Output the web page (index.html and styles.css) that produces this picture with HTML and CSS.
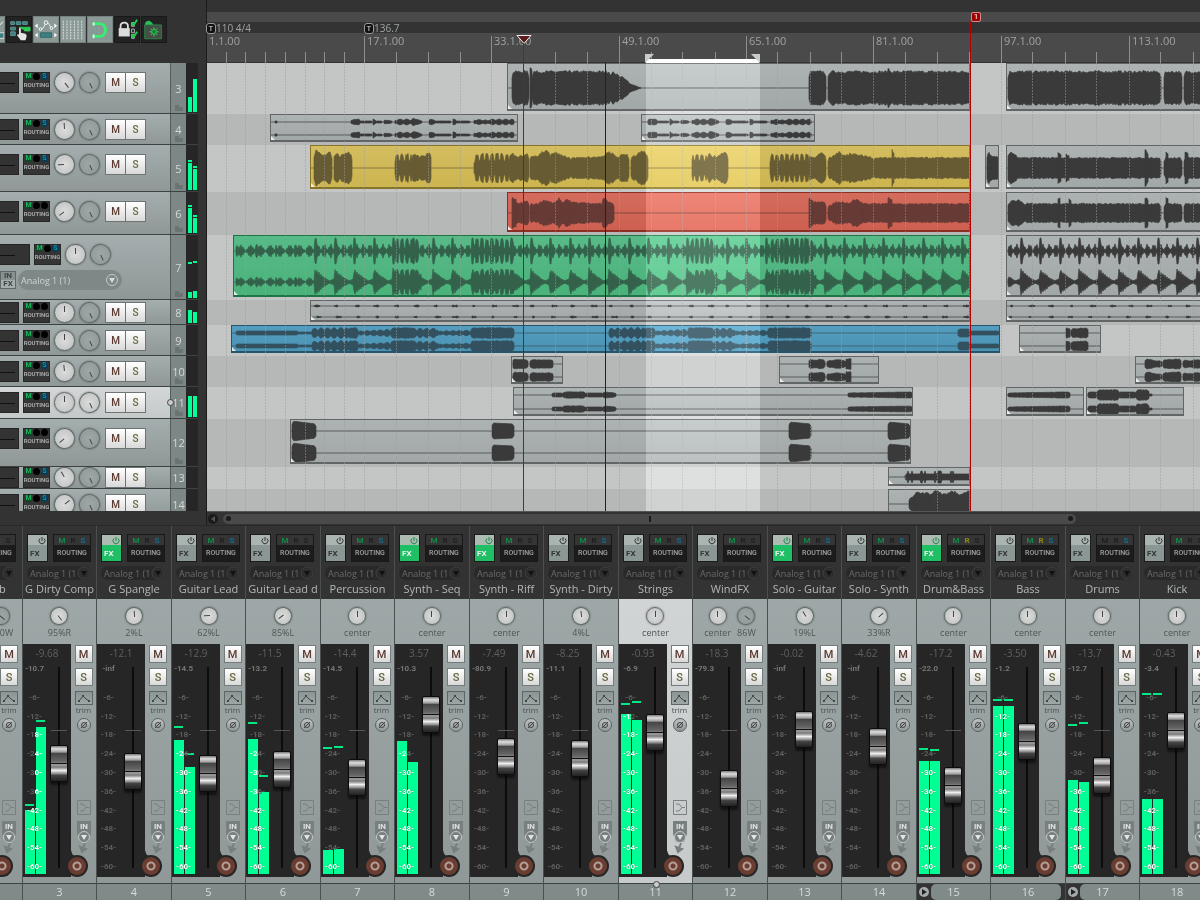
FILE: index.html
```html
<!DOCTYPE html>
<html lang="en">
	<head>
		<meta charset="UTF-8" />
		<meta name="viewport" content="width=device-width, initial-scale=1.0" />
		<title>Arrange and Mixer</title>
		<link rel="stylesheet" href="styles.css">
	</head>
	<body>
		<main class="arrange">
			<section class="side">
				<div class="toolbar">
					<button class="tool on" aria-label="Item edit"><svg viewBox="0 0 26 26"><path d="M18 5l3 3 4-4" stroke="#fff" fill="none" /><path d="M16 16h10v6H16z" fill="#3d7f80" stroke="#dfe8e6" /></svg></button>
					<button class="tool" aria-label="Grouping"><svg viewBox="0 0 26 26"><path d="M4 4h4v3H4zM10 4h5v3h-5zM17 4h5v3h-5zM4 10h5v3H4zM4 15h5v4H4z" fill="#3d7f80" stroke="#5f9997" /><path d="M13 10h5v3M19 10h6v4h-6z" fill="#2ecc55" stroke="#2ecc55" /><path d="M13 11q2-1 2 1v4l5 1q2 1 1 4l-1 3h-5l-4-5q0-2 2-1z" fill="#e4e4e4" /></svg></button>
					<button class="tool on" aria-label="Envelopes move with items"><svg viewBox="0 0 26 26"><path d="M7 12l3-1 3-6 3 1 2 4h2" stroke="#e8eeee" fill="none" /><circle cx="7" cy="12" r="1.500" fill="#8b9997" stroke="#fff" /><circle cx="13" cy="5" r="2" fill="#8b9997" stroke="#fff" /><circle cx="19" cy="11" r="1.500" fill="#8b9997" stroke="#fff" /><path d="M4 6v5L1 8.500zM22 6v5l3-2.500zM4 16v5l-3-2.500zM22 16v5l3-2.500z" fill="#fff" /><path d="M7 16h12v5H7z" fill="#3d7f80" stroke="#2f6a6b" /></svg></button>
					<button class="tool on" aria-label="Grid lines"><svg viewBox="0 0 26 26"><path d="M2.500 3v20M6.500 3v20M10.500 3v20M14.500 3v20M18.500 3v20M22.500 3v20" stroke="#e4eae8" stroke-dasharray="2 1" /></svg></button>
					<button class="tool on" aria-label="Snapping"><svg viewBox="0 0 26 26"><path d="M4.500 3v20M9.500 3v20M14.500 3v20M19.500 3v20M23.500 3v20" stroke="#6ea091" stroke-dasharray="2 1" /><path d="M6 6h7q6 1 6 7t-6 7H6" stroke="#38f070" stroke-width="3" fill="none" /><path d="M6 5v3M6 18v4" stroke="#d6ffe0" stroke-width="2" /></svg></button>
					<button class="tool" aria-label="Locking"><svg viewBox="0 0 26 26"><path d="M6 12V9q0-4 4-4t4 4v3" stroke="#dcdcdc" stroke-width="2" fill="none" /><path d="M4 11h12v9H4z" fill="#dcdcdc" /><path d="M18 5h3v4h-3zM18 12h3v4h-3zM18 18h3v4h-3z" stroke="#bbb" fill="none" /><path d="M18 5l2 3 4-6M18 18l2 3 4-6" stroke="#22d055" stroke-width="2" fill="none" /></svg></button>
					<button class="tool" aria-label="Project settings"><svg viewBox="0 0 26 26"><path d="M3 7q1-4 4-4t5 4v2H3z" fill="#22c055" /><path d="M3 7.500h18v15H3z" fill="#454d47" stroke="#2c8a48" /><path d="M13 10v10M8 15h10M9.500 11.500l7 7M16.500 11.500l-7 7" stroke="#2fe565" /><circle cx="13" cy="15" r="2.500" fill="#177a35" stroke="#2fc55a" /></svg></button>
				</div>
				<div class="tracks" id="tracks"></div>
			</section>

			<section class="timeline">
				<header class="ruler" id="ruler">
					<div class="regions"></div>
					<div class="tempo"></div>
					<div class="bars"></div>
				</header>
				<div class="lanes" id="lanes"></div>
				<div class="scroll">
					<button class="scroll-left" aria-label="Scroll left"><svg viewBox="0 0 10 10"><path d="M7 2v6L3 5z" fill="#555" /></svg></button>
					<div class="scroll-bar"><i></i><b></b><i></i></div>
				</div>
			</section>
		</main>

		<section class="mixer" id="mixer"></section>

		<script src="script.js"></script>
	</body>
</html>
```
FILE: styles.css
```css
* {
	box-sizing: border-box;
}

body {
	margin: 0;
	height: 100vh;
	display: flex;
	flex-direction: column;
	overflow: hidden;
	background-color: #333;
	color: #b4b7b7;
	font-family: "Open Sans", "Noto Sans", sans-serif;
	font-size: 11px;
}

button,
select,
input {
	margin: 0;
	padding: 0;
	border: 0;
	font-family: inherit;
	color: inherit;
}

svg {
	display: block;
}

.arrange {
	flex: 1;
	min-height: 0;
	display: grid;
	grid-template-columns: 206px 1fr;
}

/* ---- track panel ---- */

.side {
	display: flex;
	flex-direction: column;
	min-height: 0;
	overflow: hidden;
	padding: 16px 8px 14px 0;
}

.toolbar {
	display: flex;
	gap: 1px;
	width: 190px;
	height: 47px;
	margin-left: -21px;
}

.tool {
	flex: none;
	width: 26px;
	height: 27px;
	background-color: #222;
	border: 1px solid #191919;
}

.tool svg {
	width: 24px;
	height: 24px;
}

.tool.on {
	background-color: #8b9997;
	border-color: #77827f;
}

.tracks {
	flex: 1;
	min-height: 0;
	overflow: hidden;
}

.track {
	display: grid;
	grid-template-columns: 170px 16px 12px;
	border-bottom: 1px solid #3c4141;
	overflow: hidden;
}

.track-main {
	background-image: linear-gradient(#a5aeae, #8f9897);
	overflow: hidden;
}

.track.selected .track-main {
	background-image: linear-gradient(#d3d7d7, #c5c9c9);
}

.track-controls {
	display: flex;
	align-items: center;
	height: 100%;
	max-height: 39px;
	gap: 4px;
}

.track-vol {
	width: 19px;
	height: 21px;
	background-image: linear-gradient(#111, #111);
	background-repeat: no-repeat;
	background-size: 15px 1px;
	background-position: 0 10px;
	background-color: #333;
	border: 1px solid #252525;
	border-left: 0;
}

.tall .track-vol {
	width: 30px;
}

.routing-mini {
	width: 27px;
	height: 21px;
	background-color: #353535;
	border: 1px solid #272727;
	display: flex;
	flex-direction: column;
	align-items: center;
	gap: 1px;
}

.dots {
	display: flex;
	gap: 1px;
}

.dots i {
	width: 7px;
	height: 7px;
	border-radius: 50%;
	background-color: #000;
	color: #000;
	font: bold 7px/7px Roboto, sans-serif;
	text-align: center;
}

.dots .m {
	background-color: #0a4a26;
	color: #1fb560;
}

.dots .s {
	background-color: #083c50;
	color: #1b8cb4;
}

.routing-mini span {
	font: bold 6px/8px Roboto, sans-serif;
	color: #aaa;
}

.knob {
	appearance: none;
	flex: none;
	width: 21px;
	height: 21px;
	border-radius: 50%;
	border: 1px solid #626969;
	background: linear-gradient(#444, #444) 50% 3px / 1px 6px no-repeat, radial-gradient(#dcdcdc, #bdbfbf);
	box-shadow: 0 0 2px rgba(0, 0, 0, 0.5);
	transform: rotate(var(--turn));
}

.knob.width {
	background: linear-gradient(#444, #444) 50% 3px / 1px 6px no-repeat, radial-gradient(#9fa8a7, #8d9796);
}

.selected .knob.width {
	background-image: linear-gradient(#444, #444), radial-gradient(#dcdcdc, #bdbfbf);
}

.knob::-webkit-slider-thumb {
	appearance: none;
	width: 1px;
	height: 1px;
}

.mute-solo {
	display: flex;
	margin-left: 1px;
	border: 1px solid #6d7474;
}

.ms {
	background-image: linear-gradient(#fff, #d9d9d9);
	font: 500 10px/17px Roboto, sans-serif;
	color: #5c3a30;
}

.ms.solo {
	color: #65693f;
}

.mute-solo .ms {
	width: 19px;
	height: 19px;
}

.mute-solo .solo {
	border-left: 1px solid #6d7474;
	width: 20px;
}

.track-input {
	display: flex;
	align-items: center;
	gap: 2px;
	height: 20px;
	margin-top: -4px;
}

.in-fx {
	width: 16px;
	height: 18px;
	background-image: linear-gradient(#87918f 50%, #a4afad 50%);
	border: 1px solid #5f6868;
	font: bold 8px/8px Roboto, sans-serif;
	color: #3c4343;
}

.pill {
	appearance: none;
	border-radius: 10px;
	background-repeat: no-repeat;
	text-overflow: clip;
	overflow: hidden;
	white-space: nowrap;
}

.track-input .pill {
	width: 104px;
	height: 20px;
	padding: 0 22px 0 3px;
	font-size: 9px;
	color: #d0d4d4;
	background-color: #7d8887;
	background-image: url("data:image/svg+xml,%3Csvg xmlns='http://www.w3.org/2000/svg' width='14' height='14'%3E%3Ccircle cx='7' cy='7' r='5.500' fill='none' stroke='%23c4caca'/%3E%3Cpath d='M4 5h6l-3 5z' fill='%23d6dada'/%3E%3C/svg%3E");
	background-position: right 3px center;
}

.track-number {
	position: relative;
	display: grid;
	place-items: center;
	background-color: #7c8786;
	border-left: 1px solid #555c5c;
	color: #d5d8d8;
}

.track-number svg {
	position: absolute;
	left: 4px;
	bottom: 2px;
	width: 8px;
	height: 6px;
}

.selected .track-number::before {
	content: "";
	position: absolute;
	left: -4px;
	width: 5px;
	height: 5px;
	border: 1px solid #444;
	border-radius: 50%;
	background-color: #ccc;
}

.track-meter {
	position: relative;
	display: flex;
	align-items: flex-end;
	gap: 1px;
	padding: 0 1px 1px 2px;
	background-color: #262626;
}

.track-meter i {
	width: 4px;
	background-color: #00ff94;
}

.track-meter .peak {
	position: absolute;
	left: 2px;
	height: 2px;
}

.track-meter .peak.right {
	left: 7px;
}

/* ---- timeline ---- */

.timeline {
	display: flex;
	flex-direction: column;
	min-width: 0;
	min-height: 0;
	padding-top: 12px;
	border-left: 1px solid #1c1c1c;
}

.ruler {
	position: relative;
	color: #a0a3a3;
}

.regions {
	height: 10px;
	background-color: #4a4a4a;
}

.tempo {
	height: 11px;
	background-color: #333;
}

.bars {
	height: 30px;
	background-color: #4a4a4a;
	border-bottom: 1px solid #333;
}

.ruler svg {
	position: absolute;
	left: 0;
	bottom: 0;
}

.ruler span {
	position: absolute;
	line-height: 12px;
}

.bar-label {
	top: 23px;
}

.ruler .tempo-label {
	top: 11px;
	font-size: 10px;
	line-height: 11px;
	display: flex;
}

.tempo-label i {
	width: 10px;
	height: 11px;
	border: 1px solid #999;
	border-radius: 3px;
	background-color: #111;
	color: #ddd;
	font: 8px/9px Roboto, sans-serif;
	text-align: center;
}

.ruler .marker {
	top: 0;
	width: 10px;
	height: 10px;
	border: 1px solid #d88;
	border-radius: 2px;
	background-color: #a00000;
	color: #fff;
	font: 8px/8px Roboto, sans-serif;
	text-align: center;
}

.ruler .loop {
	bottom: 0;
	height: 4px;
	background-color: #fff;
}

.lanes {
	flex: 1;
	min-height: 0;
	position: relative;
	overflow: hidden;
	background-color: #c4c6c5;
}

.lane {
	position: relative;
}

.lane:nth-child(even) {
	background-color: #b6b8b7;
}

.clip {
	position: absolute;
	top: 0;
	bottom: 3px;
	border: 1px solid #626565;
	border-bottom-width: 2px;
	background-image: linear-gradient(#adb3b3, #a2a8a8);
	fill: #3a3a3a;
	stroke: #3a3a3a;
	overflow: hidden;
}

.clip::after {
	content: "";
	position: absolute;
	left: 0;
	bottom: 0;
	border: 2px solid transparent;
	border-left-color: #fff;
	border-bottom-color: #fff;
	opacity: 0.8;
}

.clip.yellow {
	background-image: linear-gradient(#d3bd5f, #cdb550);
	border-color: #86742b;
	fill: #675b33;
	stroke: #675b33;
}

.clip.red {
	background-image: linear-gradient(#d46c5e, #cd5f4f);
	border-color: #8b2f25;
	fill: #663a35;
	stroke: #663a35;
}

.clip.green {
	background-image: linear-gradient(#57ba87, #4bb27b);
	border-color: #1f7347;
	fill: #33614a;
	stroke: #33614a;
}

.clip.blue {
	background-image: linear-gradient(#559dbe, #4a93b5);
	border-color: #26556b;
	fill: #33505e;
	stroke: #33505e;
}

.clip svg {
	position: absolute;
	left: 0;
	top: 0;
}

.overlay {
	position: absolute;
	top: 0;
	bottom: 0;
}

.overlay.selection {
	background-color: #1a1a1a;
	mix-blend-mode: plus-lighter;
}

.overlay.edit {
	width: 1px;
	background-color: #8a1c1c;
}

.overlay.play {
	width: 1px;
	background-color: #222;
}

.overlay.mark {
	width: 1px;
	background-color: #b80000;
}

.scroll {
	display: flex;
	align-items: center;
	gap: 5px;
	height: 14px;
	padding-left: 1px;
	border-top: 1px solid #555;
}

.scroll-left {
	width: 10px;
	height: 10px;
	border-radius: 50%;
	background-color: #1a1a1a;
}

.scroll-bar {
	width: 86%;
	height: 10px;
	padding: 0 3px;
	border-radius: 5px;
	background-color: #4a4a4a;
	display: flex;
	align-items: center;
	justify-content: space-between;
}

.scroll-bar i {
	width: 5px;
	height: 5px;
	border-radius: 50%;
	background-color: #1a1a1a;
}

.scroll-bar b {
	width: 2px;
	height: 6px;
	background-color: #1a1a1a;
}

/* ---- mixer ---- */

.mixer {
	display: flex;
	flex: none;
	margin-left: -53px;
	border-top: 1px solid #292929;
}

.strip {
	flex: none;
	width: 75px;
	border-left: 1px solid #4a4f4f;
	background-image: linear-gradient(#a2abab, #8f9897);
}

.strip:nth-child(even) {
	width: 74px;
}

.strip.selected {
	background-image: linear-gradient(#d3d7d7, #c5c9c9);
}

.strip-head {
	height: 73px;
	padding-top: 8px;
	background-color: #333;
}

.strip-io {
	display: grid;
	grid-template-columns: 21px 38px;
	grid-template-rows: 28px 14px;
	gap: 4px 5px;
	padding-left: 4px;
}

.fx {
	border: 1px solid #1b1b1b;
	background-image: linear-gradient(#aab5b2 40%, #8b9795 40%);
	display: grid;
	grid-template-rows: 11px 15px;
	color: #333;
	font: bold 8px/15px Roboto, sans-serif;
	text-align: left;
	padding-left: 2px;
}

.fx svg {
	width: 8px;
	height: 8px;
	margin: 2px 0 0 8px;
	stroke: #333;
	fill: none;
}

.fx.on {
	background-image: linear-gradient(#aebbb2 40%, #1fbf66 40%);
	color: #eee;
}

.fx.on svg {
	stroke: #138a45;
}

.routing {
	border: 1px solid #181818;
	background-image: linear-gradient(#353535 40%, #1c1c1c 40%);
	display: grid;
	grid-template-rows: 11px 15px;
	font: 500 7px/15px Roboto, sans-serif;
	color: #a2a2a2;
}

.mrs {
	display: flex;
	justify-content: space-around;
	padding: 0 2px;
	font: bold 8px/11px Roboto, sans-serif;
}

.mrs i {
	font-style: normal;
	color: #202020;
}

.mrs .m {
	color: #12894a;
}

.mrs .r {
	color: #8b8a10;
}

.mrs .s {
	color: #116f90;
}

.strip-io .pill {
	grid-column: 1 / 3;
	height: 14px;
	padding: 0 15px 0 3px;
	font-size: 9px;
	line-height: 13px;
	color: #6a6a6a;
	background-color: #292929;
	background-image: url("data:image/svg+xml,%3Csvg xmlns='http://www.w3.org/2000/svg' width='14' height='14'%3E%3Ccircle cx='7' cy='7' r='6' fill='%232d2d2d' stroke='%23404040'/%3E%3Cpath d='M4 5h6l-3 5z' fill='%23111'/%3E%3C/svg%3E");
	background-position: right center;
}

.strip-name {
	margin-top: 2px;
	text-align: center;
	line-height: 14px;
	white-space: nowrap;
}

.pan {
	display: flex;
	justify-content: center;
	gap: 6px;
	height: 45px;
	padding-top: 8px;
}

.pan label {
	display: flex;
	flex-direction: column;
	align-items: center;
	gap: 1px;
	font-size: 9px;
	line-height: 13px;
	color: #4f5555;
}

.pan .knob {
	width: 18px;
	height: 18px;
}

.strip-body {
	position: relative;
	display: grid;
	grid-template-columns: 48px 1fr;
	height: 233px;
}

.fader-panel {
	display: grid;
	grid-template-columns: 23px 25px;
	grid-template-rows: 18px 212px;
	padding-bottom: 3px;
	background-color: #262626;
}

.db {
	grid-column: 1 / 3;
	text-align: center;
	line-height: 18px;
	font-size: 10px;
	color: #606060;
}

.meter {
	position: relative;
	display: flex;
	align-items: flex-end;
	gap: 1px;
	padding-left: 2px;
}

.meter-bar {
	flex: none;
	width: 10px;
	background-color: #00ff94;
}

.meter-peak {
	position: absolute;
	left: 2px;
	width: 9px;
	height: 2px;
	background-color: #00e884;
}

.meter-peak.right {
	left: 13px;
}

.scale {
	position: absolute;
	inset: 0;
	display: flex;
	flex-direction: column;
	justify-content: space-between;
	padding-bottom: 1px;
	font: bold 8px/12px Roboto, sans-serif;
	color: #5e5e5e;
	text-align: center;
}

.scale .top {
	height: 14px;
	margin-bottom: 9px;
	color: #757575;
	white-space: nowrap;
	line-height: 14px;
}

.scale .lit {
	color: #fff;
	text-shadow: 0 0 1px #063;
}

.scale .lit-left,
.scale .lit-right {
	color: transparent;
	background-image: linear-gradient(90deg, #fff 54%, #5e5e5e 54%);
	-webkit-background-clip: text;
	background-clip: text;
}

.scale .lit-right {
	background-image: linear-gradient(90deg, #5e5e5e 54%, #fff 54%);
}

.fader-cell {
	background-image: linear-gradient(#555, #555), linear-gradient(#0c0c0c, #0c0c0c);
	background-repeat: no-repeat;
	background-position: 50% 68px, 50% 5px;
	background-size: 16px 1px, 2px 201px;
	padding-top: 5px;
	display: flex;
	justify-content: center;
}

.fader {
	appearance: none;
	writing-mode: vertical-lr;
	direction: rtl;
	width: 18px;
	height: 201px;
	background: none;
}

.fader::-webkit-slider-thumb {
	appearance: none;
	width: 18px;
	height: 37px;
	border: 1px solid #0c0c0c;
	border-radius: 2px;
	box-shadow: 0 3px 2px rgba(0, 0, 0, 0.5);
	background-image: linear-gradient(#777 0, #ddd 8%, #999 18%, #444 20%, #666 44%, #888 47%, #111 48%, #111 52%, #aaa 53%, #777 60%, #eee 70%, #999 78%, #444 84%, #222 100%);
}

.strip-side {
	display: flex;
	flex-direction: column;
	align-items: center;
	padding-top: 1px;
}

.strip-side .ms {
	width: 18px;
	height: 18px;
	margin-bottom: 5px;
	border: 1px solid #747b7b;
	font-size: 11px;
	line-height: 15px;
}

.env {
	width: 18px;
	height: 14px;
	border: 1px solid #5d6666;
	background-image: linear-gradient(#8a9594, #9ca7a6);
}

.env svg {
	width: 16px;
	height: 12px;
	stroke: #3f4747;
	fill: #3f4747;
}

.trim {
	font-size: 8px;
	line-height: 10px;
	color: #4b5151;
	margin-bottom: 3px;
}

.phase {
	width: 14px;
	height: 14px;
	border: 1px solid #565d5d;
	border-radius: 50%;
	background-image: linear-gradient(#c0c4c4, #8f9796);
}

.phase svg {
	width: 12px;
	height: 12px;
	stroke: #444;
	fill: none;
}

.io {
	width: 16px;
	height: 54px;
	margin-top: 68px;
	fill: none;
	stroke: #77807f;
}

.io text {
	font: bold 8px Roboto, sans-serif;
	fill: #dde0e0;
	stroke: none;
}

.strip-body::after {
	content: "";
	position: absolute;
	left: 48px;
	bottom: 20px;
	width: 6px;
	height: 6px;
	background-image: radial-gradient(circle at 100% 0, transparent 5px, #262626 6px);
}

.rec {
	position: absolute;
	left: 45px;
	bottom: 2px;
	width: 18px;
	height: 18px;
	border-radius: 50%;
	background-image: radial-gradient(#6a3d30 2px, #b59d97 3px, #b59d97 4px, #6a3d30 5px);
	box-shadow: 0 0 0 2px #262626;
}

.strip-foot {
	position: relative;
	margin-top: 6px;
	height: 17px;
	border-top: 1px solid #3c4141;
	background-color: #7f8a89;
	color: #d8dbdb;
	text-align: center;
	line-height: 16px;
}

.selected .strip-foot::before {
	content: "";
	position: absolute;
	left: calc(50% - 3px);
	top: -3px;
	width: 5px;
	height: 5px;
	border: 1px solid #444;
	border-radius: 50%;
	background-color: #ccc;
}

.strip-foot.folder {
	display: grid;
	grid-template-columns: 14px 1fr 14px;
	background-color: #333;
}

.strip-foot.folder span {
	grid-column: 2 / 4;
	padding-right: 14px;
	background-color: #7f8a89;
	border-radius: 5px 0 0 5px;
}

.strip-foot.folder svg {
	width: 10px;
	height: 10px;
	margin: 3px 2px;
}

.strip-foot.last {
	background-color: #333;
	padding-right: 4px;
}

.strip-foot.last span {
	display: block;
	padding-left: 4px;
	background-color: #7f8a89;
	border-radius: 0 5px 5px 0;
}
```
FILE: script.js
```js
const PANEL = 207; // left edge of the timeline
const METER_TOP = 662;
const METER_BOTTOM = 874;

let seed = 7;
function rnd() {
	seed = (seed * 16807) % 2147483647;
	return seed / 2147483647;
}

/* number, height, pan angle, routing flags, meter heights and peaks */
const tracks = [
	{ n: 3, h: 51, pan: 142, s: true, m: [15, 33] },
	{ n: 4, h: 31, pan: -3, s: true },
	{ n: 5, h: 47, pan: -93, s: true, m: [27, 21], peaks: [29, 23] },
	{ n: 6, h: 43, pan: -127, m: [25, 15], peaks: [27, 17] },
	{ n: 7, h: 65, pan: 0, s: true, m: [6, 7], peaks: [35, 36], tall: true },
	{ n: 8, h: 25, pan: 0, m: [13, 11], small: true },
	{ n: 9, h: 31, pan: 0 },
	{ n: 10, h: 31, pan: -6, s: true },
	{ n: 11, h: 32, pan: 0, s: true, m: [21, 21], selected: true },
	{ n: 12, h: 48, pan: -130 },
	{ n: 13, h: 22, pan: -30, s: true, small: true },
	{ n: 14, h: 31, pan: 50, s: true, small: true },
];

const folder = '<svg viewBox="0 0 8 6"><path d="M0 0h4v2h4v4H0z" fill="#6a7473"/></svg>';

document.getElementById("tracks").innerHTML = tracks.map((t) => `
	<div class="track ${t.selected ? "selected" : ""} ${t.tall ? "tall" : ""}" style="height:${t.h}px">
		<div class="track-main">
			<div class="track-controls">
				<div class="track-vol"></div>
				<button class="routing-mini"><div class="dots"><i class="m">M</i><i></i><i class="${t.s ? "s" : ""}">S</i></div><span>ROUTING</span></button>
				<input class="knob" type="range" aria-label="Pan ${t.n}" style="--turn:${t.pan}deg">
				<input class="knob width" type="range" aria-label="Width ${t.n}" style="--turn:155deg">
				${t.tall ? "" : '<div class="mute-solo"><button class="ms">M</button><button class="ms solo">S</button></div>'}
			</div>
			${t.tall ? `<div class="track-input"><button class="in-fx">IN FX</button><select class="pill" aria-label="Input ${t.n}"><option>Analog 1 (1)</option></select></div>` : ""}
		</div>
		<div class="track-number">${t.n}${t.small ? "" : folder}</div>
		<div class="track-meter">${(t.m || []).map((v) => `<i style="height:${v}px"></i>`).join("")}${(t.peaks || []).map((v, i) => `<i class="peak ${i ? "right" : ""}" style="bottom:${v}px"></i>`).join("")}</div>
	</div>`).join("");

/* ---- ruler ---- */

const minor = [226, 245, 265, 285, 305, 324, 344, 396, 428, 460, 555, 587, 651, 682, 715, 777, 810, 841, 905, 937, 969, 1032, 1065, 1096, 1160, 1193];
const major = { 206: "1.1.00", 364: "17.1.00", 491: "33.1.00", 619: "49.1.00", 746: "65.1.00", 873: "81.1.00", 1001: "97.1.00", 1129: "113.1.00" };
const majorX = Object.keys(major).map(Number);
const line = (x, y, h) => `M${x - PANEL + 0.5} ${y}v${h}`;

document.getElementById("ruler").insertAdjacentHTML("beforeend", `
	<svg width="100%" height="28" stroke="#8c8f8f"><path d="${minor.map((x) => line(x, 17, 11)).join("")}${majorX.slice(1).map((x) => line(x, 1, 27)).join("")}"/></svg>
	${majorX.map((x) => `<span class="bar-label" style="left:${x - PANEL + 3}px">${major[x]}</span>`).join("")}
	<span class="tempo-label" style="left:-1px"><i>T</i>110 4/4</span>
	<span class="tempo-label" style="left:157px"><i>T</i>136.7</span>
	<span class="marker" style="left:764px">1</span>
	<span class="loop" style="left:439px;width:113px"></span>
	<svg width="100%" height="28"><path d="M438 19h9l-9 9zM553 19h-9l9 9z" fill="#c9cccc"/><path d="M310 .5h14l-7 8z" fill="#5c1c1c" stroke="#eee"/></svg>`);

/* ---- clips: a wave is a list of [from, to, start level, end level, shape] ---- */

const mono = (w) => [w];
const stereo = (w) => [w, w];
const shift = (w, d) => w.map((s) => [s[0] + d, s[1] + d, ...s.slice(2)]);

const guitar = [[350, 359, 2, 3], [359, 371, 1, 1], [372, 375, 3, 1], [375, 381, 1, 1], [383, 391, 2, 1], [394, 411, 3, 3, "blob"], [411, 421, 4, 1], [428, 434, 3, 2], [434, 450, 1, 1], [452, 455, 3, 2], [455, 469, 1, 1], [473, 487, 3, 2, "blob"], [487, 513, 3, 3, "blob"]];
const pulse = [[311, 347, 5, 6, "blob"], [347, 357, 5, 5], [357, 390, 2, 4, "blob"], [390, 415, 5, 5], [415, 437, 5, 5, "blob"], [437, 470, 2, 3, "blob"], [470, 513, 5, 5]];
const dots = (a, b) => {
	const list = [];
	for (let x = a; x < b; x += 19.6) {
		const from = x + rnd() * 3;
		list.push([from, from + 2 + rnd() * 5, 1, 1, "beat"]);
	}
	return list;
};

const clips = [
	{ t: 0, x: 507, w: 463, waves: mono([[511, 528, 16, 16], [529, 531, 21, 18], [531, 610, 16, 16], [609, 619, 16, 13], [618, 629, 13, 5], [627, 640, 5, 0], [808, 825, 16, 16], [827, 970, 16, 16], [887, 889, 21, 16]]) },
	{ t: 0, x: 1006, w: 700, waves: mono([[1007, 1160, 16, 16], [1163, 1181, 16, 16], [1183, 1700, 16, 16]]) },
	{ t: 1, x: 270, w: 248, waves: stereo([[274, 276, 1, 1], ...guitar]) },
	{ t: 1, x: 641, w: 174, waves: stereo([[647, 654, 3, 2], ...shift(guitar, 297)]) },
	{ t: 2, x: 310, w: 660, c: "yellow", waves: mono([[313, 331, 16, 15, "body"], [333, 351, 16, 14, "body"], [394, 411, 15, 15, "beat"], [411, 430, 13, 15, "body"], [473, 508, 15, 15, "beat"], [508, 528, 14, 14, "body"], [529, 550, 13, 17, "body"], [549, 570, 16, 10], [569, 604, 10, 11], [602, 628, 15, 13, "body"], [630, 647, 15, 15, "body"], [691, 706, 15, 15, "beat"], [706, 727, 13, 15, "body"], [769, 808, 15, 15, "beat"], [808, 825, 14, 14, "body"], [827, 848, 12, 17, "body"], [847, 873, 15, 10], [872, 970, 10, 10], [891, 893, 18, 15]]) },
	{ t: 2, x: 985, w: 14, waves: mono([[986, 998, 17, 11, "body"]]) },
	{ t: 2, x: 1006, w: 700, waves: mono([[1007, 1017, 17, 11], [1015, 1160, 10, 10], [1057, 1060, 16, 14], [1065, 1068, 14, 12], [1144, 1147, 18, 14], [1163, 1181, 10, 10], [1165, 1167, 17, 14], [1183, 1700, 10, 10], [1184, 1187, 17, 14]]) },
	{ t: 3, x: 507, w: 463, c: "red", waves: mono([[511, 515, 15, 13], [514, 528, 12, 11, "body"], [529, 561, 10, 14, "body"], [559, 602, 11, 9], [564, 569, 13, 12], [601, 607, 15, 14], [605, 613, 12, 9], [808, 812, 15, 13], [811, 825, 11, 11], [827, 863, 10, 13, "body"], [861, 970, 9, 9], [887, 891, 15, 13]]) },
	{ t: 3, x: 1006, w: 700, waves: mono([[1007, 1025, 14, 11, "body"], [1023, 1160, 9, 9], [1057, 1059, 15, 14], [1068, 1070, 14, 13], [1144, 1147, 15, 13], [1163, 1181, 9, 9], [1165, 1167, 15, 14], [1183, 1700, 9, 9]]) },
	{ t: 4, x: 233, w: 737, c: "green", waves: [[[235, 313, 8, 8, "bump"], [313, 970, 13, 13, "hit"], [394, 418, 13, 13, "comb"], [472, 513, 13, 13, "comb"], [690, 712, 13, 13, "comb"], [770, 812, 13, 13, "comb"]], [[235, 313, 6, 6, "bump"], [313, 970, 15, 15, "decay"], [394, 420, 13, 13, "beat"], [472, 513, 13, 13, "beat"], [692, 716, 13, 13, "beat"], [770, 815, 13, 13, "beat"]]] },
	{ t: 4, x: 1006, w: 700, waves: [[[1007, 1700, 13, 13, "hit"]], [[1007, 1700, 15, 15, "decay"]]] },
	{ t: 5, x: 310, w: 660, waves: [dots(313, 965), dots(314, 965)] },
	{ t: 5, x: 1006, w: 700, waves: [dots(1008, 1400), dots(1007, 1400)] },
	{ t: 6, x: 231, w: 769, c: "blue", waves: stereo([[235, 297, 2, 2, "even"], [297, 311, 1, 1, "even"], ...pulse, ...shift(pulse, 297), [957, 969, 4, 4, "even"], [969, 998, 2, 2, "even"]]) },
	{ t: 6, x: 1019, w: 82, waves: stereo([[1065, 1069, 5, 4], [1070, 1087, 4, 5]]) },
	{ t: 7, x: 511, w: 52, waves: stereo([[512, 527, 5, 4], [529, 552, 4, 4]]) },
	{ t: 7, x: 779, w: 100, waves: stereo([[808, 824, 5, 4, "body"], [826, 845, 4, 4, "body"], [845, 850, 5, 5]]) },
	{ t: 7, x: 1135, w: 500, waves: stereo([[1144, 1161, 5, 3, "body"], [1162, 1180, 4, 5], [1182, 1400, 4, 4, "body"]]) },
	{ t: 8, x: 513, w: 400, waves: stereo([[551, 562, 2, 2, "even"], [562, 584, 3, 3], [584, 602, 2, 2, "even"], [602, 615, 3, 2], [847, 911, 2, 3]]) },
	{ t: 8, x: 1006, w: 78, waves: stereo([[1007, 1069, 2, 3]]) },
	{ t: 8, x: 1086, w: 98, waves: stereo([[1087, 1096, 3, 3, "even"], [1096, 1118, 5, 5], [1118, 1135, 3, 3, "even"], [1135, 1148, 5, 5], [1148, 1151, 1, 1]]) },
	{ t: 9, x: 290, w: 621, waves: stereo([[291, 315, 10, 7, "even"], [491, 513, 8, 7, "even"], [788, 810, 9, 7, "even"], [887, 909, 9, 7, "even"]]) },
	{ t: 10, x: 888, w: 82, waves: mono([[904, 970, 6, 6, "spike"]]) },
	{ t: 11, x: 888, w: 82, waves: mono([[908, 915, 5, 10], [913, 929, 11, 11], [927, 970, 12, 12, "body"]]) },
];

function level(shape, x, a) {
	const p = ((((x - 235) % 19.6) + 19.6) % 19.6) / 19.6;
	const odd = x % 2;
	if (shape === "even") return a;
	if (shape === "body") return a * (0.82 + 0.12 * Math.sin(x / 2.6) + 0.2 * rnd());
	if (shape === "beat") return a * (Math.floor(x / 2.5) % 2 ? 0.55 : 1) * (0.8 + 0.2 * rnd());
	if (shape === "comb") return a * (Math.floor(x / 2.5) % 2 ? 0.2 : 1) * (0.8 + 0.2 * rnd());
	if (shape === "blob") return a * (0.45 + 0.55 * Math.abs(Math.sin(x / 2.1))) * (0.9 + 0.1 * rnd());
	if (shape === "spike") return a * (rnd() > 0.75 ? 1 : 0.5);
	if (shape === "bump") return a * (0.12 + 0.65 * Math.sin(p * Math.PI * 2) ** 2 * (odd ? 0.5 : 1) + (p < 0.08 ? 0.6 : 0));
	if (shape === "hit") return a * (p < 0.11 ? 1 : 0.1 + 0.45 * Math.sin(p * Math.PI * 3) ** 2 * (odd ? 0.5 : 1));
	if (shape === "decay") {
		const tail = p > 0.8 ? 0.25 * (p - 0.6) * 2 : 0.06;
		return a * Math.max(tail, (1 - p) ** 1.5 * (odd ? 0.7 : 1) * (0.85 + 0.15 * rnd()));
	}
	return a * (0.92 + 0.17 * rnd());
}

function drawWave(clip, height) {
	return clip.waves.map((wave, i) => {
		const mid = Math.round((height * (i + 0.5)) / clip.waves.length);
		let d = `M0 ${mid}H${clip.w}`;
		wave.forEach(([from, to, a, b, shape]) => {
			const up = [];
			const down = [];
			for (let x = from; x <= to; x += 1) {
				const base = a + ((b - a) * (x - from)) / (to - from);
				// round off both ends of a burst
				const edge = Math.min(x - from, to - x);
				const fade = to - from < 6 ? 1 : edge < 1 ? 0.65 : edge < 2 ? 0.9 : 1;
				const v = level(shape, x, base) * fade;
				const px = (x - clip.x).toFixed(1);
				up.push(`${px} ${(mid - v).toFixed(1)}`);
				down.unshift(`${px} ${(mid + v).toFixed(1)}`);
			}
			d += `M${up.join("L")}L${down.join("L")}Z`;
		});
		return `<path d="${d}" stroke-width="0.7"/>`;
	}).join("");
}

const lanes = document.getElementById("lanes");
lanes.innerHTML = tracks.map((t, i) => `
	<div class="lane" style="height:${t.h}px">${clips.filter((c) => c.t === i).map((c) => `
		<div class="clip ${c.c || ""}" style="left:${c.x - PANEL}px;width:${c.w}px"><svg width="${c.w}" height="${t.h - 3}">${drawWave(c, t.h - 4)}</svg></div>`).join("")}
	</div>`).join("") + `
	<svg class="overlay" width="100%" height="100%" stroke="#9a9c9c" stroke-opacity="0.5" stroke-dasharray="2 1"><path d="${minor.concat(majorX.slice(1)).map((x) => line(x, 0, 1000)).join("")}"/></svg>
	<div class="overlay selection" style="left:439px;width:114px"></div>
	<div class="overlay edit" style="left:316px"></div>
	<div class="overlay play" style="left:398px"></div>
	<div class="overlay mark" style="left:763px"></div>`;

/* the edit cursor and the marker go on up through the ruler */
document.getElementById("ruler").insertAdjacentHTML("beforeend", `
	<svg width="100%" height="51"><path d="M316.500 31v20" stroke="#8a1c1c"/><path d="M763.500 10v41" stroke="#b80000"/></svg>`);

/* ---- mixer: bars, peaks and cap are y positions on the meter ---- */

const strips = [
	{ n: 2, name: "Guitar b", pan: "center", width: "100W", db: "-9.10", top: "-inf", cap: 750, r: "mr" },
	{ n: 3, name: "G Dirty Comp", pan: "95%R", turn: 142, db: "-9.68", top: "-10.7", bars: [810, 727], peaks: [804, 720], cap: 745, r: "ms" },
	{ n: 4, name: "G Spangle", pan: "2%L", turn: -3, db: "-12.1", top: "-inf", cap: 753, r: "ms", fx: true },
	{ n: 5, name: "Guitar Lead", pan: "62%L", turn: -93, db: "-12.9", top: "-14.5", bars: [740, 767], peaks: [726, 753], cap: 755, r: "ms" },
	{ n: 6, name: "Guitar Lead d", pan: "85%L", turn: -127, db: "-11.5", top: "-13.2", bars: [739, 792], peaks: [722, 775], cap: 751, r: "m" },
	{ n: 7, name: "Percussion", pan: "center", db: "-14.4", top: "-14.5", bars: [850, 849], peaks: [747, 746], cap: 759, r: "ms" },
	{ n: 8, name: "Synth - Seq", pan: "center", db: "3.57", top: "-10.3", bars: [741, 762], cap: 696, r: "m", fx: true },
	{ n: 9, name: "Synth - Riff", pan: "center", db: "-7.49", top: "-80.9", cap: 738, r: "m", fx: true },
	{ n: 10, name: "Synth - Dirty", pan: "4%L", turn: -6, db: "-8.25", top: "-11.1", cap: 740, r: "ms" },
	{ n: 11, name: "Strings", pan: "center", db: "-0.93", top: "-6.9", bars: [714, 720], peaks: [703, 701], cap: 714, r: "ms", selected: true },
	{ n: 12, name: "WindFX", pan: "center", width: "86W", db: "-18.3", top: "-79.3", cap: 770, r: "m" },
	{ n: 13, name: "Solo - Guitar", pan: "19%L", turn: -30, db: "-0.02", top: "-inf", cap: 711, r: "ms", fx: true },
	{ n: 14, name: "Solo - Synth", pan: "33%R", turn: 50, db: "-4.62", top: "-inf", cap: 728, r: "ms" },
	{ n: 15, name: "Drum&amp;Bass", pan: "center", db: "-17.2", top: "-22.0", bars: [761, 761], peaks: [748, 749], cap: 767, r: "mr", fx: true, foot: "folder" },
	{ n: 16, name: "Bass", pan: "center", db: "-3.50", top: "-1.2", bars: [706, 706], peaks: [699, 699], cap: 723, r: "mrs", foot: "last" },
	{ n: 17, name: "Drums", pan: "center", db: "-13.7", top: "-12.7", bars: [780, 782], peaks: [724, 722], cap: 757, r: "s", foot: "folder" },
	{ n: 18, name: "Kick", pan: "center", db: "-0.43", top: "-3.4", bars: [799, 799], peaks: [693, 693], cap: 712, r: "m" },
];

function scaleLabels(bars) {
	let html = "";
	for (let i = 0; i < 10; i++) {
		const y = 698 + i * 18.8;
		const left = y > bars[0];
		const right = y > bars[1];
		const lit = left && right ? "lit" : left ? "lit-left" : right ? "lit-right" : "";
		html += `<span class="${lit}">-${(i + 1) * 6}-</span>`;
	}
	return html;
}

document.getElementById("mixer").innerHTML = strips.map((s) => {
	const bars = s.bars || [METER_BOTTOM, METER_BOTTOM];
	return `
	<article class="strip ${s.selected ? "selected" : ""}">
		<div class="strip-head">
			<div class="strip-io">
				<button class="fx ${s.fx ? "on" : ""}"><svg viewBox="0 0 8 8"><path d="M4 0v4M2 1.500a3 3 0 1 0 4 0"/></svg>FX</button>
				<button class="routing"><span class="mrs">${["m", "r", "s"].map((k) => `<i class="${s.r.includes(k) ? k : ""}">${k.toUpperCase()}</i>`).join("")}</span>ROUTING</button>
				<select class="pill" aria-label="Input ${s.n}"><option>Analog 1 (1)</option></select>
			</div>
			<div class="strip-name">${s.name}</div>
		</div>
		<div class="pan">
			<label><input class="knob" type="range" style="--turn:${s.turn || 0}deg">${s.pan}</label>
			${s.width ? `<label><input class="knob width" type="range" style="--turn:130deg">${s.width}</label>` : ""}
		</div>
		<div class="strip-body">
			<div class="fader-panel">
				<div class="db">${s.db}</div>
				<div class="meter">
					${bars.map((y) => `<i class="meter-bar" style="height:${METER_BOTTOM - y}px"></i>`).join("")}
					${(s.peaks || []).map((y, i) => `<i class="meter-peak ${i ? "right" : ""}" style="top:${y - METER_TOP}px"></i>`).join("")}
					<div class="scale"><span class="top">${s.top}</span>${scaleLabels(bars)}</div>
				</div>
				<div class="fader-cell"><input class="fader" type="range" min="0" max="164" value="${831 - s.cap}" aria-label="Volume ${s.n}"></div>
			</div>
			<div class="strip-side">
				<button class="ms">M</button>
				<button class="ms solo">S</button>
				<button class="env" aria-label="Envelope"><svg viewBox="0 0 16 12"><path d="M3 9l4-5 3 3 3 2" fill="none"/><path d="M2 8h2v2H2zM6 3h2v2H6zM12 8h2v2h-2z" stroke="none"/></svg></button>
				<span class="trim">trim</span>
				<button class="phase" aria-label="Phase"><svg viewBox="0 0 12 12"><circle cx="6" cy="6" r="2.500"/><path d="M3 9l6-6"/></svg></button>
				<svg class="io" viewBox="0 0 16 54"><path d="M1.500 .5h13v14h-13z"/><path d="M4 4h3l3 3.500h3M7 11l3-3.500M4 11h3"/><path d="M1 21h14v13l-3 8H4l-3-8z" fill="#77807f" stroke="none"/><text x="4" y="29">IN</text><circle cx="8" cy="37" r="5.500" stroke="#c3c9c9" fill="#77807f"/><path d="M5 35h6l-3 5z" fill="#e2e5e5" stroke="none"/><path d="M9 43l-3 8M4 47l2 5 4-3z" stroke-width="2"/></svg>
			</div>
			<button class="rec" aria-label="Record arm"></button>
		</div>
		<div class="strip-foot ${s.foot || ""}">${s.foot === "folder" ? '<svg viewBox="0 0 10 10"><circle cx="5" cy="5" r="5" fill="#a5abab"/><path d="M3 2v6l5-3z" fill="#222"/></svg>' : ""}<span>${s.n}</span></div>
	</article>`;
}).join("");
```
